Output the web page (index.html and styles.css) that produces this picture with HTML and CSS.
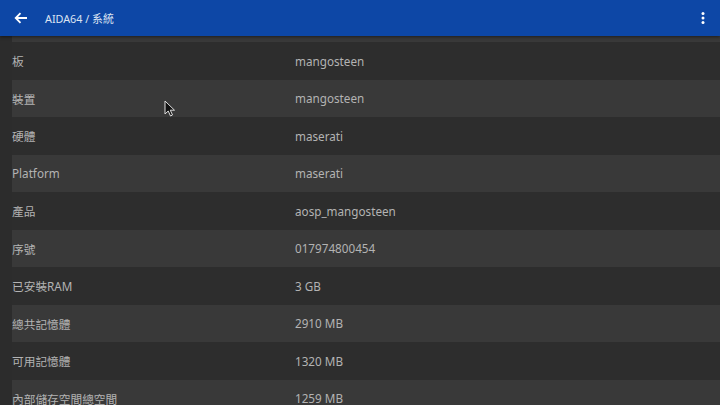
FILE: index.html
```html
<!DOCTYPE html>
<html>
<head>
<meta charset="utf-8">
<link rel="stylesheet" href="styles.css">
</head>
<body>
<div class="app">
  <header class="bar">
    <svg class="back" width="14" height="12" viewBox="0 0 14 12"><path d="M13 6H2M6.5 1.2L1.7 6l4.8 4.8" fill="none" stroke="#fff" stroke-width="1.8"/></svg>
    <span class="title">AIDA64 / 系統</span>
    <span class="spacer"></span>
    <svg class="more" width="4" height="14" viewBox="0 0 4 14"><circle cx="2" cy="2.5" r="1.5" fill="#fff"/><circle cx="2" cy="7" r="1.5" fill="#fff"/><circle cx="2" cy="11.5" r="1.5" fill="#fff"/></svg>
  </header>
  <div class="list">
    <div class="row light partial"></div>
    <div class="row"><span class="k">板</span><span class="v">mangosteen</span></div>
    <div class="row light"><span class="k">裝置</span><span class="v">mangosteen</span></div>
    <div class="row"><span class="k">硬體</span><span class="v">maserati</span></div>
    <div class="row light"><span class="k">Platform</span><span class="v">maserati</span></div>
    <div class="row"><span class="k">產品</span><span class="v">aosp_mangosteen</span></div>
    <div class="row light"><span class="k">序號</span><span class="v">017974800454</span></div>
    <div class="row"><span class="k">已安裝RAM</span><span class="v">3 GB</span></div>
    <div class="row light"><span class="k">總共記憶體</span><span class="v">2910 MB</span></div>
    <div class="row"><span class="k">可用記憶體</span><span class="v">1320 MB</span></div>
    <div class="row light"><span class="k">內部儲存空間總空間</span><span class="v">1259 MB</span></div>
  </div>
  <svg class="cursor" width="12" height="18" viewBox="0 0 12 18"><path d="M1 1v13l3.2-3 2.3 5 2-1-2.2-4.8H10.5z" fill="#111" stroke="#ddd" stroke-width="1"/></svg>
</div>
</body>
</html>
```
FILE: styles.css
```css
html, body {
  margin: 0;
  padding: 0;
  background: #2c2c2c;
}
.app {
  position: relative;
  width: 720px;
  height: 405px;
  overflow: hidden;
  font-family: "Noto Sans", "Noto Sans CJK TC", sans-serif;
}
.bar {
  height: 36px;
  background: #0d47a6;
  display: flex;
  align-items: center;
  padding: 0 14px;
  box-shadow: 0 1px 3px rgba(0,0,0,0.5);
  position: relative;
  z-index: 1;
}
.back { flex: none; }
.title {
  margin-left: 17px;
  color: #dde4f2;
  font-size: 10.8px;
}
.spacer { flex: 1; }
.more { margin-right: 1px; }
.list {
  padding-left: 12px;
}
.row {
  height: 37.5px;
  display: flex;
  align-items: center;
  background: #2d2d2d;
  color: #b3b3b3;
  font-size: 11.7px;
}
.row.light { background: #393939; }
.row.partial { height: 6px; }
.k { width: 283px; }
.cursor {
  position: absolute;
  left: 164px;
  top: 100px;
}
```
